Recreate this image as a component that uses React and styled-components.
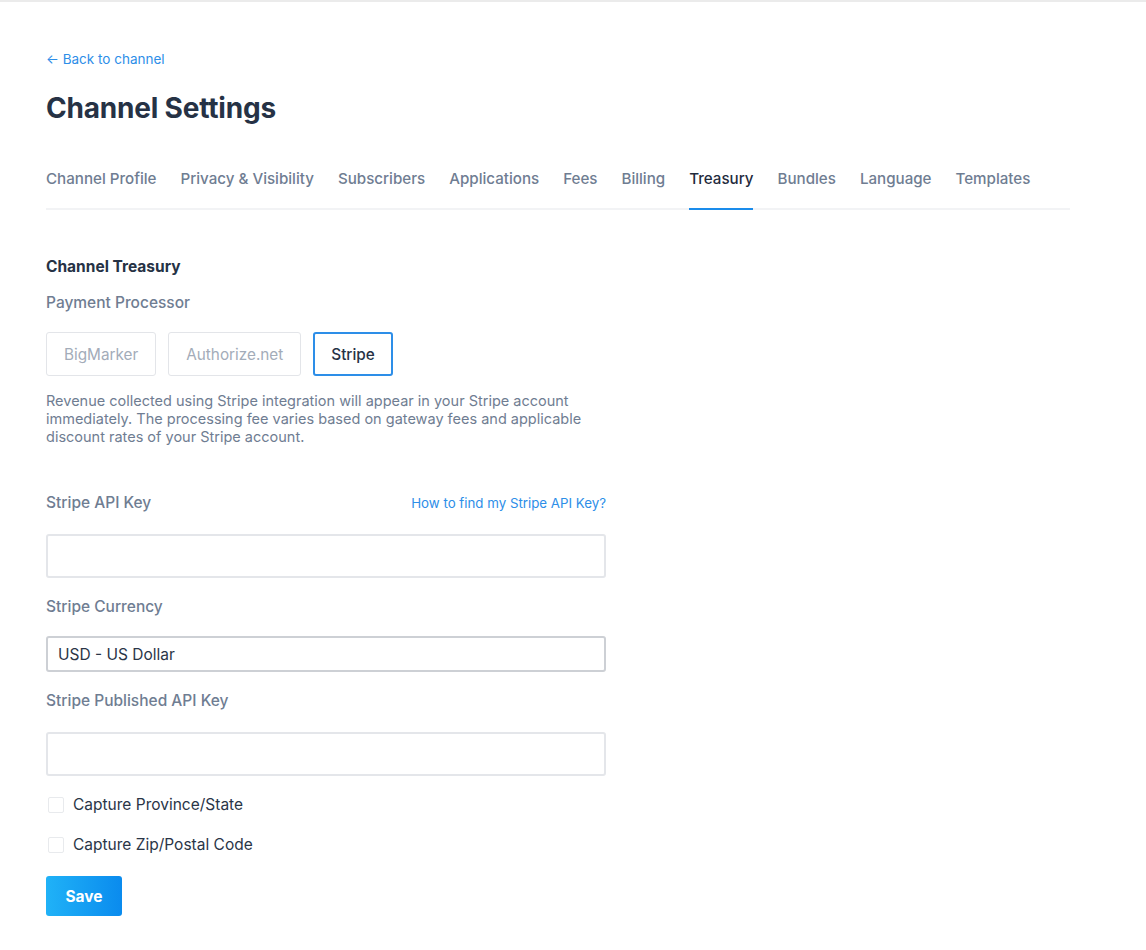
import React, { useState } from "react";
import styled, { createGlobalStyle } from "styled-components";

const GlobalStyle = createGlobalStyle`
  html, body {
    margin: 0;
    padding: 0;
    background: #fff;
  }
  body {
    font-family: "Inter", "Lato", "Liberation Sans", sans-serif;
    color: #2a3547;
    -webkit-font-smoothing: antialiased;
  }
`;

const tabs = [
  "Channel Profile",
  "Privacy & Visibility",
  "Subscribers",
  "Applications",
  "Fees",
  "Billing",
  "Treasury",
  "Bundles",
  "Language",
  "Templates",
];

const processors = ["BigMarker", "Authorize.net", "Stripe"];

const App = () => {
  const [active, setActive] = useState("Treasury");
  const [processor, setProcessor] = useState("Stripe");

  return (
    <>
      <GlobalStyle />
      <TopBar />
      <Page>
        <BackLink href="#">← Back to channel</BackLink>
        <Title>Channel Settings</Title>
        <Tabs>
          {tabs.map((t) => (
            <Tab key={t} active={t === active} onClick={() => setActive(t)}>
              {t}
            </Tab>
          ))}
        </Tabs>

        <Form>
          <SectionTitle>Channel Treasury</SectionTitle>
          <Label>Payment Processor</Label>
          <ProcessorRow>
            {processors.map((p) => (
              <ProcessorButton
                key={p}
                selected={p === processor}
                onClick={() => setProcessor(p)}
              >
                {p}
              </ProcessorButton>
            ))}
          </ProcessorRow>
          <Description>
            Revenue collected using Stripe integration will appear in your Stripe account
            immediately. The processing fee varies based on gateway fees and applicable
            discount rates of your Stripe account.
          </Description>

          <FieldHeader>
            <FieldLabel>Stripe API Key</FieldLabel>
            <HelpLink href="#">How to find my Stripe API Key?</HelpLink>
          </FieldHeader>
          <TextInput />

          <FieldLabel>Stripe Currency</FieldLabel>
          <Select defaultValue="USD">
            <option value="USD">USD - US Dollar</option>
            <option value="EUR">EUR - Euro</option>
          </Select>

          <FieldLabel>Stripe Published API Key</FieldLabel>
          <TextInput />

          <CheckRow>
            <CheckBox type="checkbox" />
            Capture Province/State
          </CheckRow>
          <CheckRow>
            <CheckBox type="checkbox" />
            Capture Zip/Postal Code
          </CheckRow>

          <SaveButton>Save</SaveButton>
        </Form>
      </Page>
    </>
  );
};

export default App;

const TopBar = styled.div`
  height: 2px;
  background: #ebebeb;
`;

const Page = styled.div`
  width: 1024px;
  padding: 48px 46px 40px;
`;

const BackLink = styled.a`
  display: block;
  font-size: 13.5px;
  line-height: 18px;
  color: #2d8ee8;
  text-decoration: none;
`;

const Title = styled.h1`
  margin: 23px 0 0;
  font-size: 28px;
  line-height: 34px;
  font-weight: 700;
  color: #263245;
  letter-spacing: -0.2px;
`;

const Tabs = styled.div`
  display: flex;
  gap: 24px;
  margin-top: 44px;
  border-bottom: 2px solid #f2f3f5;
`;

const Tab = styled.div`
  font-size: 15.15px;
  line-height: 20px;
  padding-bottom: 19px;
  margin-bottom: -2px;
  color: ${(p) => (p.active ? "#1f2b3d" : "#6f7d92")};
  font-weight: 500;
  border-bottom: 2px solid ${(p) => (p.active ? "#1a8ceb" : "transparent")};
  cursor: pointer;
  white-space: nowrap;
`;

const Form = styled.div`
  width: 560px;
  padding-top: 47px;
  display: flex;
  flex-direction: column;
`;

const SectionTitle = styled.div`
  font-size: 15.5px;
  line-height: 20px;
  font-weight: 700;
  color: #263245;
`;

const Label = styled.div`
  margin-top: 16px;
  font-size: 15.5px;
  line-height: 20px;
  font-weight: 500;
  color: #6f7d92;
`;

const ProcessorRow = styled.div`
  display: flex;
  gap: 12px;
  margin-top: 19px;
`;

const ProcessorButton = styled.button`
  height: 44px;
  padding: 0 ${(p) => (p.selected ? "16px" : "17px")};
  font-family: inherit;
  font-size: 15.3px;
  font-weight: ${(p) => (p.selected ? 500 : 400)};
  color: ${(p) => (p.selected ? "#263245" : "#a3acb9")};
  background: #fff;
  border: ${(p) => (p.selected ? "2px solid #2d8ee8" : "1px solid #e3e5e9")};
  border-radius: 3px;
  cursor: pointer;
`;

const Description = styled.p`
  margin: 16px 0 0;
  font-size: 14.5px;
  line-height: 18px;
  color: #6f7d92;
`;

const FieldHeader = styled.div`
  display: flex;
  justify-content: space-between;
  align-items: baseline;
  margin-top: 47px;
`;

const FieldLabel = styled.div`
  font-size: 15.5px;
  line-height: 20px;
  font-weight: 500;
  color: #6f7d92;
  margin-top: 19px;
  ${FieldHeader} & {
    margin-top: 0;
  }
`;

const HelpLink = styled.a`
  font-size: 13.3px;
  color: #2d8ee8;
  text-decoration: none;
`;

const TextInput = styled.input`
  box-sizing: border-box;
  width: 100%;
  height: 44px;
  margin-top: 21px;
  border: 2px solid #e4e6ea;
  border-radius: 3px;
  padding: 0 12px;
  font-family: inherit;
  font-size: 15.5px;
  outline: none;
`;

const Select = styled.select`
  box-sizing: border-box;
  width: 100%;
  height: 36px;
  margin-top: 19px;
  border: 2px solid #cdd0d5;
  border-radius: 3px;
  padding: 0 10px;
  font-family: inherit;
  font-size: 15.5px;
  color: #2a3547;
  background: #fff;
  appearance: none;
  outline: none;
`;

const CheckRow = styled.label`
  display: flex;
  align-items: center;
  gap: 9px;
  margin-top: 19px;
  font-size: 15.5px;
  line-height: 20px;
  color: #2a3547;
  cursor: pointer;
  & + & {
    margin-top: 20px;
  }
`;

const CheckBox = styled.input`
  appearance: none;
  margin: 0 0 0 2px;
  width: 16px;
  height: 16px;
  border: 1px solid #e8eaed;
  border-radius: 2px;
  background: #fff;
  &:checked {
    background: #2d8ee8;
    border-color: #2d8ee8;
  }
`;

const SaveButton = styled.button`
  align-self: flex-start;
  margin-top: 21px;
  width: 76px;
  height: 40px;
  border: none;
  border-radius: 3px;
  background: linear-gradient(90deg, #20b2f7 0%, #0a8bee 100%);
  color: #fff;
  font-family: inherit;
  font-size: 15.5px;
  font-weight: 700;
  cursor: pointer;
`;
